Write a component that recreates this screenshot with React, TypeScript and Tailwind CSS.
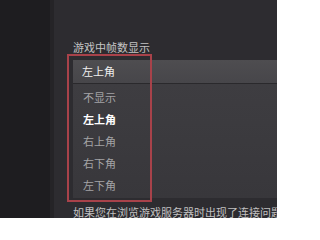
import React from "react";

export default function App() {
  const items = ["不显示", "左上角", "右上角", "右下角", "左下角"];
  return (
    <div
      className="flex w-[277px] h-[218px] max-w-full overflow-hidden bg-[#2d2c30]"
      style={{ fontFamily: '"Noto Sans CJK SC", "Noto Sans", sans-serif' }}
    >
      <div className="w-[50px] shrink-0 bg-[#1e1d20]" />
      <div className="w-[4px] shrink-0 bg-[#252427]" />
      <div className="relative flex-1 min-w-0 overflow-hidden pl-[19px] pt-[40px]">
        <div className="h-[14px] leading-[14px] text-[11px] text-[#c4c4c4] whitespace-nowrap">
          游戏中帧数显示
        </div>
        <div className="mt-[6px] h-[23px] flex items-center pl-[9px] bg-gradient-to-b from-[#4e4d50] to-[#47464a] text-[11px] text-[#f0f0f0]">
          左上角
        </div>
        <div className="h-[1px] bg-[#2a292c]" />
        <div className="pt-[2px] pb-[2px] bg-gradient-to-b from-[#3e3d41] to-[#38373b]">
          {items.map((t, i) => (
            <div
              key={i}
              className={
                i === 1
                  ? "h-[22px] flex items-center pl-[10px] text-[11px] text-white font-bold"
                  : "h-[22px] flex items-center pl-[10px] text-[11px] text-[#a4a4a6]"
              }
            >
              {t}
            </div>
          ))}
        </div>
        <div className="mt-[7px] h-[14px] leading-[14px] text-[11px] text-[#c0c0c0] whitespace-nowrap overflow-hidden">
          如果您在浏览游戏服务器时出现了连接问题
        </div>
        <div className="absolute left-[13px] top-[54px] w-[85px] h-[148px] border-[2px] border-[#a8424a] pointer-events-none" />
      </div>
    </div>
  );
}
